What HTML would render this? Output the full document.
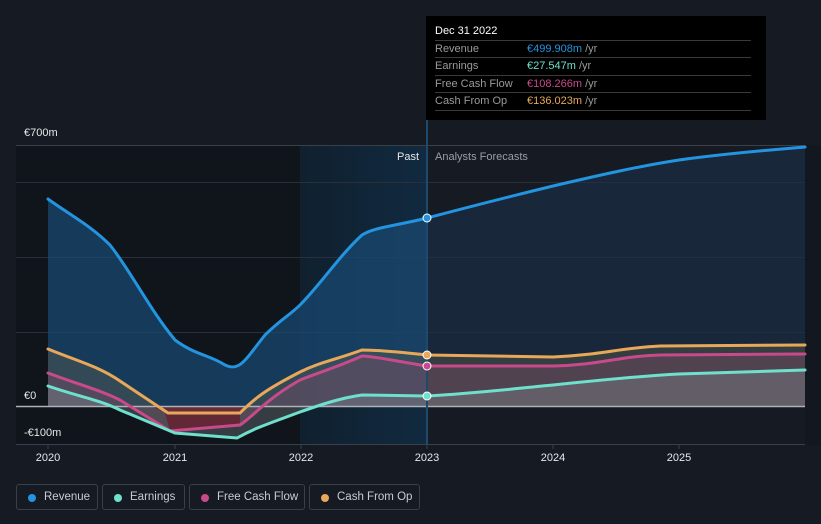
<!DOCTYPE html><html><head><style>
body{margin:0;width:821px;height:524px;background:#151a23;font-family:"Liberation Sans",sans-serif;overflow:hidden;position:relative}
.tt{position:absolute;left:426px;top:16px;width:340px;height:104px;background:#000;color:#fff;font-size:11px}
.tt .h{position:absolute;left:9px;top:9px;font-size:11px}
.row{position:absolute;left:9px;width:316px;border-top:1px solid #3a3a3a;height:17px;line-height:17px;color:#9a9a9a}
.row b{font-weight:normal;position:absolute;left:92px}
.lg{position:absolute;top:484px;height:26px;border:1px solid #3a3f48;border-radius:3px;color:#c8ccd2;font-size:11.5px;line-height:25px;box-sizing:border-box}
.lg i{position:absolute;left:11px;top:9px;width:8px;height:8px;border-radius:50%}
.lg span{position:absolute;left:27px}
</style></head><body>
<svg width="821" height="524" style="position:absolute;left:0;top:0">
<defs><linearGradient id="pg" x1="0" x2="1"><stop offset="0" stop-color="#10202e"/><stop offset="1" stop-color="#112a40"/></linearGradient></defs>
<rect x="16" y="145" width="284" height="300" fill="#10141b"/>
<rect x="300" y="145" width="127" height="300" fill="url(#pg)"/>
<rect x="805" y="145" width="16" height="300" fill="#131820"/>
<g stroke="#2a303a" stroke-width="1">
<line x1="16" x2="805" y1="145.5" y2="145.5" stroke="#3a404a"/>
<line x1="16" x2="805" y1="182.5" y2="182.5"/>
<line x1="16" x2="805" y1="257.5" y2="257.5"/>
<line x1="16" x2="805" y1="332.5" y2="332.5"/>
<line x1="16" x2="805" y1="444.5" y2="444.5" stroke="#3a404a"/>
</g>
<path d="M48,199 C70,215 90,225 110,245 C130,270 150,310 175,340 C195,355 210,355 225,365 C240,372 245,360 265,335 C280,320 290,315 300,305 C320,285 340,255 362,235 C375,227 395,226 427,218 L427,406 L48,406Z" fill="#1a4a74" opacity="0.7"/>
<path d="M427,218 C480,204 520,194 553,186 C600,175 640,166 679,160 C730,153 770,150 805,147 L805,406 L427,406Z" fill="#1a3048" opacity="0.6"/>
<path d="M48,349 C80,362 100,367 120,381 L168,413 L240,413 C255,398 265,390 300,372 C320,362 335,360 362,350 C380,350 400,352 427,355 L553,357 C600,355 620,348 660,346 L805,345 L805,406 L48,406Z" fill="#6a6a50" opacity="0.35"/>
<path d="M48,373 C80,385 100,390 120,400 L170,431 L205,428 L240,425 C255,415 265,400 300,380 C320,372 335,368 362,356 C380,357 400,362 427,366 L553,366 C600,365 620,356 660,355 L805,354 L805,406 L48,406Z" fill="#8a4a6a" opacity="0.35"/>
<path d="M48,386 C80,397 100,400 120,410 L175,433 L237,438 C255,428 265,425 300,412 C320,405 340,398 362,395 L427,396 C480,393 520,388 553,385 C600,380 640,376 679,374 L805,370 L805,406 L48,406Z" fill="#8a9aa0" opacity="0.3"/>
<path d="M150,406 L168,413 L240,413 L248,406 Z M165,413 L170,431 L205,428 L240,425 L240,413Z" fill="#6a1a28" opacity="0.7"/>
<line x1="16" x2="805" y1="406.5" y2="406.5" stroke="#aeb2b8" stroke-width="1.5"/>
<line x1="427" x2="427" y1="120" y2="445" stroke="#1e4a6e" stroke-width="2"/>
<g fill="none" stroke-width="3" stroke-linecap="round">
<path d="M48,199 C70,215 90,225 110,245 C130,270 150,310 175,340 C195,355 210,355 225,365 C240,372 245,360 265,335 C280,320 290,315 300,305 C320,285 340,255 362,235 C375,227 395,226 427,218 C480,204 520,194 553,186 C600,175 640,166 679,160 C730,153 770,150 805,147" stroke="#2394df"/>
<path d="M48,349 C80,362 100,367 120,381 L168,413 L240,413 C255,398 265,390 300,372 C320,362 335,360 362,350 C380,350 400,352 427,355 L553,357 C600,355 620,348 660,346 L805,345" stroke="#e8a85a"/>
<path d="M48,373 C80,385 100,390 120,400 L170,431 L205,428 L240,425 C255,415 265,400 300,380 C320,372 335,368 362,356 C380,357 400,362 427,366 L553,366 C600,365 620,356 660,355 L805,354" stroke="#c84a8a"/>
<path d="M48,386 C80,397 100,400 120,410 L175,433 L237,438 C255,428 265,425 300,412 C320,405 340,398 362,395 L427,396 C480,393 520,388 553,385 C600,380 640,376 679,374 L805,370" stroke="#6ee0cc"/>
</g>
<g stroke="#fff" stroke-width="1">
<circle cx="427" cy="218" r="4" fill="#2394df"/>
<circle cx="427" cy="355" r="4" fill="#e8a85a"/>
<circle cx="427" cy="366" r="4" fill="#c84a8a"/>
<circle cx="427" cy="396" r="4" fill="#6ee0cc"/>
</g>
<g stroke="#3a404a"><line x1="48" x2="48" y1="445" y2="449"/><line x1="175" x2="175" y1="445" y2="449"/><line x1="301" x2="301" y1="445" y2="449"/><line x1="427" x2="427" y1="445" y2="449"/><line x1="553" x2="553" y1="445" y2="449"/><line x1="679" x2="679" y1="445" y2="449"/></g>
<g font-family="Liberation Sans" font-size="11" fill="#e6e8ea">
<text x="24" y="136">€700m</text><text x="24" y="399">€0</text><text x="24" y="436">-€100m</text>
<text x="48" y="461" text-anchor="middle">2020</text><text x="175" y="461" text-anchor="middle">2021</text><text x="301" y="461" text-anchor="middle">2022</text><text x="427" y="461" text-anchor="middle">2023</text><text x="553" y="461" text-anchor="middle">2024</text><text x="679" y="461" text-anchor="middle">2025</text>
<text x="419" y="160" text-anchor="end">Past</text><text x="435" y="160" fill="#9a9ea4">Analysts Forecasts</text>
</g>
</svg>
<div class="tt"><div class="h">Dec 31 2022</div>
<div class="row" style="top:24px">Revenue<b style="color:#2394df">€499.908m <span style="color:#9a9a9a">/yr</span></b></div>
<div class="row" style="top:41px">Earnings<b style="color:#6ee0cc">€27.547m <span style="color:#9a9a9a">/yr</span></b></div>
<div class="row" style="top:59px">Free Cash Flow<b style="color:#c84a8a">€108.266m <span style="color:#9a9a9a">/yr</span></b></div>
<div class="row" style="top:76px;border-bottom:1px solid #3a3a3a">Cash From Op<b style="color:#e8a85a">€136.023m <span style="color:#9a9a9a">/yr</span></b></div>
</div>
<div class="lg" style="left:16px;width:82px"><i style="background:#2394df"></i><span>Revenue</span></div>
<div class="lg" style="left:102px;width:83px"><i style="background:#6ee0cc"></i><span>Earnings</span></div>
<div class="lg" style="left:189px;width:116px"><i style="background:#c84a8a"></i><span>Free Cash Flow</span></div>
<div class="lg" style="left:309px;width:111px"><i style="background:#e8a85a"></i><span>Cash From Op</span></div>
</body></html>
